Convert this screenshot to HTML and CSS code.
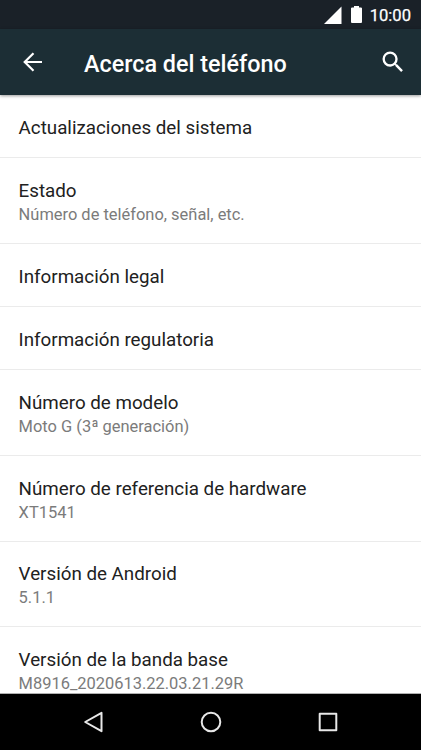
FILE: index.html
```html
<!DOCTYPE html>
<html lang="es">
<head>
<meta charset="utf-8">
<title>Acerca del teléfono</title>
<link rel="stylesheet" href="styles.css">
</head>
<body>
<div class="phone">
  <div class="status">
    <svg class="signal" width="18" height="18" viewBox="0 0 18 18"><path d="M17.5 0.5V18H0Z" fill="#fff"/></svg>
    <svg class="battery" width="11" height="17" viewBox="0 0 11 17"><path d="M3 0H8V1.5H10.3L11 2.2V16.3L10.3 17H.7L0 16.3V2.2L.7 1.5H3Z" fill="#fff"/></svg>
    <span class="clock">10:00</span>
  </div>
  <header class="bar">
    <svg class="back" width="20" height="20" viewBox="0 0 20 20"><path d="M19 10H2M10.5 1.2L1.7 10L10.5 18.8" fill="none" stroke="#fff" stroke-width="2.2"/></svg>
    <h1 class="title">Acerca del teléfono</h1>
    <svg class="search" width="28" height="28" viewBox="0 0 24 24"><path fill="#fff" d="M15.5 14h-.79l-.28-.27A6.47 6.47 0 0 0 16 9.5 6.5 6.5 0 1 0 9.5 16c1.61 0 3.09-.59 4.23-1.57l.27.28v.79l5 4.99L20.49 19l-4.99-5zm-6 0a4.5 4.5 0 1 1 0-9 4.5 4.5 0 0 1 0 9z"/></svg>
  </header>
  <main class="list">
    <div class="row"><div class="name">Actualizaciones del sistema</div></div>
    <div class="row two"><div class="name">Estado</div><div class="sub">Número de teléfono, señal, etc.</div></div>
    <div class="row"><div class="name">Información legal</div></div>
    <div class="row"><div class="name">Información regulatoria</div></div>
    <div class="row two"><div class="name">Número de modelo</div><div class="sub">Moto G (3ª generación)</div></div>
    <div class="row two"><div class="name">Número de referencia de hardware</div><div class="sub">XT1541</div></div>
    <div class="row two"><div class="name">Versión de Android</div><div class="sub">5.1.1</div></div>
    <div class="row two"><div class="name">Versión de la banda base</div><div class="sub">M8916_2020613.22.03.21.29R</div></div>
  </main>
  <nav class="nav">
    <svg width="22" height="22" viewBox="0 0 22 22"><path d="M18.5 1.8V20.2L2.2 11Z"/></svg>
    <svg width="22" height="22" viewBox="0 0 22 22"><circle cx="11" cy="11" r="9.3"/></svg>
    <svg width="22" height="22" viewBox="0 0 22 22"><path d="M2.7 2.7H19.3V19.3H2.7Z"/></svg>
  </nav>
</div>
</body>
</html>
```

FILE: styles.css
```css
body {
  margin: 0;
  font-family: Roboto, sans-serif;
}

.phone {
  display: flex;
  flex-direction: column;
  width: 421px;
  height: 750px;
  overflow: hidden;
  background: #fff;
}

.status {
  display: flex;
  align-items: center;
  justify-content: flex-end;
  flex: none;
  height: 29px;
  padding-right: 10px;
  box-sizing: border-box;
  background: #1a2128;
  color: #fff;
}

.signal {
  margin-top: 1px;
}

.battery {
  margin: 0 8px 0 9px;
}

.clock {
  padding-top: 2px;
  font-size: 16.6px;
  font-weight: 400;
  line-height: 29px;
  -webkit-text-stroke: 0.25px #fff;
}

.bar {
  display: flex;
  align-items: center;
  flex: none;
  height: 66px;
  padding: 0 14px 0 23px;
  box-sizing: border-box;
  background: #1c2e35;
  color: #fff;
  box-shadow: 0 1px 3px rgba(0, 0, 0, 0.4);
  z-index: 1;
}

.title {
  flex: 1;
  margin: 4px 0 0 41px;
  font-size: 23.35px;
  font-weight: 500;
  line-height: 30px;
}

.list {
  flex: 1;
  min-height: 0;
  overflow: hidden;
}

.row {
  height: 63.3px;
  padding: 20.7px 18.6px 0;
  box-sizing: border-box;
  border-bottom: 1px solid #ebebeb;
}

.two {
  height: 85.55px;
}

.name {
  font-size: 18.78px;
  line-height: 24px;
  color: #212121;
}

.sub {
  font-size: 16.45px;
  line-height: 23.6px;
  color: #7b7b7b;
}

.nav {
  display: flex;
  align-items: center;
  justify-content: center;
  gap: 95px;
  flex: none;
  height: 57px;
  box-sizing: border-box;
  border-top: 1px solid #b0b0b0;
  background: #000;
}

.nav path,
.nav circle {
  fill: none;
  stroke: #e8e8e8;
  stroke-width: 2;
  stroke-linejoin: round;
}
```
